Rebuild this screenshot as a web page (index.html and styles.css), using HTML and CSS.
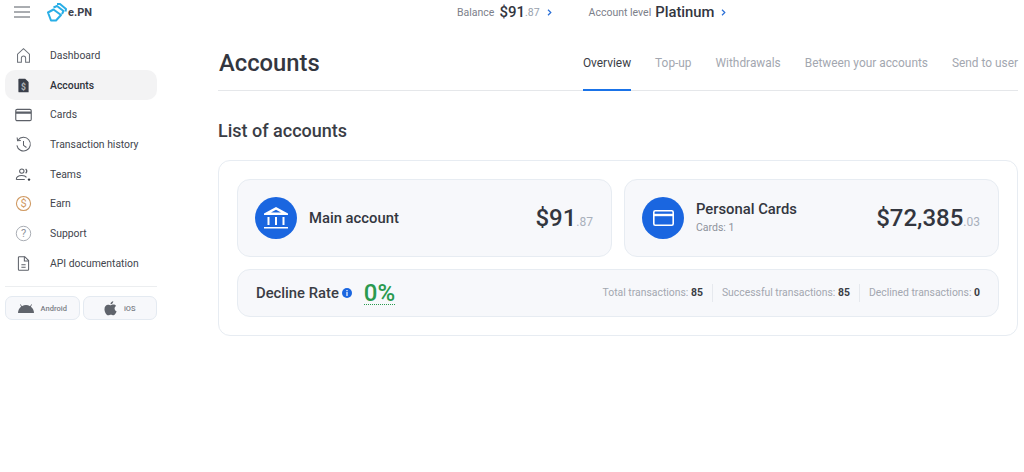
FILE: index.html
```html
<!DOCTYPE html>
<html lang="en">
<head>
<meta charset="utf-8">
<title>Accounts</title>
<link rel="stylesheet" href="styles.css">
</head>
<body>
<div class="app">
  <aside class="sidebar">
    <div class="brand">
      <svg class="burger" width="16" height="12" viewBox="0 0 16 12"><path d="M0 1h16M0 6h16M0 11h16" stroke="#555a63" stroke-width="1"/></svg>
      <svg class="logo" width="20" height="19" viewBox="0 0 20 19" fill="none" stroke="#29aee6" stroke-width="2" stroke-linejoin="round"><path d="M1 9.500 6.500 6.500l7.500 5.500-5 5.500H4z"/><path d="M6.500 4.500 10 3l6.500 5-1.500 3"/><path d="M10 1l3 0 6 5-.5 2.500"/></svg>
      <span class="logo-text">e.PN</span>
    </div>
    <nav class="nav">
      <a class="nav-item"><svg class="ico" viewBox="0 0 20 20" fill="none" stroke="#6b7078" stroke-width="1.2"><path d="M3 18V8.500L10 2l7 6.500V18h-4.500v-5a2.500 2.500 0 0 0-5 0v5z"/></svg>Dashboard</a>
      <a class="nav-item active"><svg class="ico" viewBox="0 0 20 20"><path d="M6 2h6l4 4v12H5a1 1 0 0 1-1-1V3a1 1 0 0 1 1-1z" fill="#3a3f4a"/><text x="10" y="15" class="ico-dollar">$</text></svg>Accounts</a>
      <a class="nav-item"><svg class="ico ico-wide" viewBox="0 0 18 14" fill="none" stroke="#5c6068" stroke-width="1.2"><rect x=".8" y="1" width="16.400" height="12" rx="1.500"/><path d="M1 4.500h16" stroke-width="2.400"/></svg>Cards</a>
      <a class="nav-item"><svg class="ico" viewBox="0 0 20 20" fill="none" stroke="#5c6068" stroke-width="1.2"><path d="M3.500 5A8 8 0 1 1 2.200 11"/><path d="M2.500 1.800 3 5.600l3.800-.3M10 6v5l3.500 2.500"/></svg>Transaction history</a>
      <a class="nav-item"><svg class="ico" viewBox="0 0 20 20" fill="none" stroke="#5c6068" stroke-width="1.2"><circle cx="8" cy="6" r="2.600"/><path d="M1.500 16c0-3.500 3-4.800 6.500-4.800 2.500 0 4.500.6 5.500 2.200M1.500 16h10"/><path d="M12.500 3.500a3 3 0 0 1 0 5" stroke-width="1.600"/><circle cx="16.500" cy="16" r="1.400" fill="#33373f" stroke="none"/></svg>Teams</a>
      <a class="nav-item"><svg class="ico" viewBox="0 0 20 20" fill="none" stroke="#d09a63" stroke-width="1.300"><circle cx="10" cy="10" r="8.300"/><text x="10" y="14.500" class="ico-earn">$</text></svg>Earn</a>
      <a class="nav-item"><svg class="ico" viewBox="0 0 20 20" fill="none" stroke="#9a9ea6" stroke-width="1"><circle cx="10" cy="10" r="8.500"/><text x="10" y="14.500" class="ico-q">?</text></svg>Support</a>
      <a class="nav-item"><svg class="ico" viewBox="0 0 20 20" fill="none" stroke="#5c6068" stroke-width="1.200"><path d="M5 2h6.500L16 6.500V17a1 1 0 0 1-1 1H5a1 1 0 0 1-1-1V3a1 1 0 0 1 1-1z"/><path d="M11 2v5h5M7.500 11.500h5M7.500 14.500h5"/></svg>API documentation</a>
    </nav>
    <div class="apps">
      <a class="app-btn"><svg width="16" height="9" viewBox="0 0 18 10" fill="#60646c"><path d="M0 10a9 9 0 0 1 3.500-7L2.300.5l.7-.4 1.400 2.300a9.500 9.500 0 0 1 9.200 0L15 .1l.7.4L14.500 3A9 9 0 0 1 18 10z"/></svg><span>Android</span></a>
      <a class="app-btn"><svg width="13" height="15" viewBox="0 0 14 16" fill="#60646c"><path d="M10 .3c0 1.700-1.300 3.200-3 3.100C6.900 1.900 8.400.4 10 .3zM7.200 4.500c.8 0 1.500-.7 3-.7 1.100 0 2.100.5 2.800 1.500-2.400 1.400-2 4.800.6 5.700-.7 1.900-2.200 4.400-3.500 4.400-1 0-1.500-.6-2.700-.6s-1.700.6-2.700.6C2.800 15.400.5 11.800.5 8.700c0-3 1.900-4.800 3.800-4.800 1.300 0 2.200.6 2.900.6z"/></svg><span>iOS</span></a>
    </div>
  </aside>
  <div class="content">
    <header class="topbar">
      <span class="top-label">Balance</span><span class="top-value">$91</span><span class="top-cents">.87</span><svg class="chev" width="5" height="7" viewBox="0 0 5 7" fill="none" stroke="#2a6fd6" stroke-width="1.200"><path d="M1 .8 3.800 3.500 1 6.200"/></svg>
      <span class="top-label level">Account level</span><span class="top-value plat">Platinum</span><svg class="chev" width="5" height="7" viewBox="0 0 5 7" fill="none" stroke="#2a6fd6" stroke-width="1.200"><path d="M1 .8 3.800 3.500 1 6.200"/></svg>
    </header>
    <main class="main">
      <div class="title-row">
        <h1 class="title">Accounts</h1>
        <div class="tabs">
          <a class="tab current">Overview</a>
          <a class="tab">Top-up</a>
          <a class="tab">Withdrawals</a>
          <a class="tab">Between your accounts</a>
          <a class="tab">Send to user</a>
        </div>
      </div>
      <h2 class="subtitle">List of accounts</h2>
      <section class="panel">
        <div class="cards">
          <div class="card">
            <span class="round"><svg width="26" height="24" viewBox="0 0 26 24" fill="#fff"><path d="M13 1 25 7.500V9H1V7.500zM13 3.800 8 6.600h10z" fill-rule="evenodd"/><path d="M4.500 11h2v8h-2zM12 11h2v8h-2zM19.500 11h2v8h-2zM1 21h24v1.600H1z"/></svg></span>
            <span class="card-name">Main account</span>
            <span class="amount">$91<small>.87</small></span>
          </div>
          <div class="card">
            <span class="round"><svg width="21" height="16" viewBox="0 0 21 16" fill="none" stroke="#fff" stroke-width="1.600"><rect x=".8" y=".8" width="19.400" height="14.400" rx="1.500"/><path d="M1 5h19" stroke-width="2.400"/></svg></span>
            <span class="card-info"><span class="card-name">Personal Cards</span><span class="card-sub">Cards: 1</span></span>
            <span class="amount">$72,385<small>.03</small></span>
          </div>
        </div>
        <div class="rate">
          <span class="rate-label">Decline Rate</span>
          <svg class="info" width="10" height="10" viewBox="0 0 10 10"><circle cx="5" cy="5" r="5" fill="#1a66e0"/><path d="M4.400 2h1.200v1.200H4.400zM4.400 4h1.200v4H4.400z" fill="#fff"/></svg>
          <span class="rate-value">0%</span>
          <div class="stats">
            <span class="stat">Total transactions: <b>85</b></span>
            <span class="stat">Successful transactions: <b>85</b></span>
            <span class="stat">Declined transactions: <b>0</b></span>
          </div>
        </div>
      </section>
    </main>
  </div>
</div>
</body>
</html>
```
FILE: styles.css
```css
* { box-sizing: border-box; }
html, body { margin: 0; height: 100%; overflow: hidden; background: #fff; }
body { font-family: Roboto, "Liberation Sans", sans-serif; color: #33363f; }
.app { display: flex; height: 472px; }

.sidebar { width: 218px; flex: none; padding: 0 61px 0 5px; }
.brand { display: flex; align-items: center; height: 24px; }
.burger { margin-left: 9px; }
.logo { margin-left: 17px; }
.logo-text { margin-left: 1px; font-size: 11px; font-weight: 700; color: #3c424c; }
.nav { margin-top: 16.500px; display: flex; flex-direction: column; border-bottom: 1px solid #eceef0; padding-bottom: 8px; }
.nav-item { display: flex; align-items: center; height: 29.700px; padding-left: 10px; border-radius: 10px; font-size: 10.400px; color: #42454d; white-space: nowrap; }
.nav-item.active { background: #f3f3f4; color: #2f323a; font-weight: 500; }
.ico { width: 17px; height: 17px; margin-right: 18px; flex: none; }
.ico-wide { height: 14px; }
.ico-dollar { font: 700 10px Roboto, sans-serif; fill: #fff; text-anchor: middle; opacity: .6; }
.ico-earn { font: 400 13px Roboto, sans-serif; fill: #d09a63; stroke: none; text-anchor: middle; }
.ico-q { font: 400 13px Roboto, sans-serif; fill: #8e929a; stroke: none; text-anchor: middle; }
.apps { display: flex; gap: 3px; margin-top: 9px; }
.app-btn { flex: 1; height: 24px; display: flex; align-items: center; justify-content: center; gap: 7px; border: 1px solid #e4eaf1; border-radius: 7px; background: #f7f8fb; font-size: 7.500px; font-weight: 500; color: #7a7e86; }

.content { flex: none; width: 806px; }
.topbar { height: 24px; display: flex; align-items: center; padding-left: 239px; }
.top-label { font-size: 10.500px; color: #7c808a; }
.top-value { margin-left: 5px; font-size: 15px; font-weight: 500; color: #33363f; }
.top-cents { font-size: 10.500px; color: #98a1ad; }
.chev { margin-left: 7px; }
.level { margin-left: 37px; }
.plat { margin-left: 4px; font-size: 14.800px; }

.main { padding-right: 6px; }
.title-row { display: flex; justify-content: space-between; align-items: flex-start; height: 44px; margin-top: 23px; border-bottom: 1px solid #e5e7ea; }
.title { margin: 1px 0 0 1px; font-size: 23.800px; line-height: 30px; font-weight: 500; color: #33363f; }
.tabs { display: flex; gap: 24px; }
.tab { height: 44px; padding-top: 8px; font-size: 11.880px; line-height: 16px; color: #a3a7b0; white-space: nowrap; }
.tab.current { color: #3a3d45; border-bottom: 2px solid #1a73e8; }
.subtitle { margin: 29px 0 18px; font-size: 18px; line-height: 22px; font-weight: 500; color: #3a3d45; }

.panel { border: 1px solid #e7ecf2; border-radius: 12px; padding: 18px; height: 176px; width: 800px; }
.cards { display: flex; gap: 12px; }
.card { flex: 1; height: 78px; display: flex; align-items: center; padding: 0 18px 0 17px; background: #f7f8fb; border: 1px solid #e7ecf2; border-radius: 13px; }
.round { width: 42px; height: 42px; border-radius: 50%; background: #1a66e0; display: flex; align-items: center; justify-content: center; margin-right: 12px; flex: none; }
.card-name { font-size: 14.800px; font-weight: 500; color: #33363f; line-height: 18px; }
.card-info { display: flex; flex-direction: column; padding-bottom: 2px; }
.card-sub { font-size: 10.500px; line-height: 15px; color: #8e939b; margin-top: 2px; }
.amount { margin-left: auto; font-size: 24px; font-weight: 500; color: #33363f; }
.amount small { font-size: 12px; font-weight: 400; color: #a9b0bb; }
.rate { margin-top: 12px; height: 48px; display: flex; align-items: center; padding: 0 18px; background: #f7f8fb; border: 1px solid #e7ecf2; border-radius: 13px; }
.rate-label { font-size: 14.800px; font-weight: 500; color: #3a3d45; }
.info { margin-left: 3px; }
.rate-value { margin-left: 12px; font-size: 24px; line-height: 22px; font-weight: 500; color: #2a9a4f; border-bottom: 1.500px dotted #2a9a4f; }
.stats { margin-left: auto; display: flex; }
.stat { font-size: 10.400px; line-height: 18px; color: #a3a7b0; padding: 0 9px; border-left: 1px solid #e6e9ee; }
.stat:first-child { border-left: 0; }
.stat:last-child { padding-right: 0; }
.stat b { color: #3a3d45; font-weight: 700; }
```
